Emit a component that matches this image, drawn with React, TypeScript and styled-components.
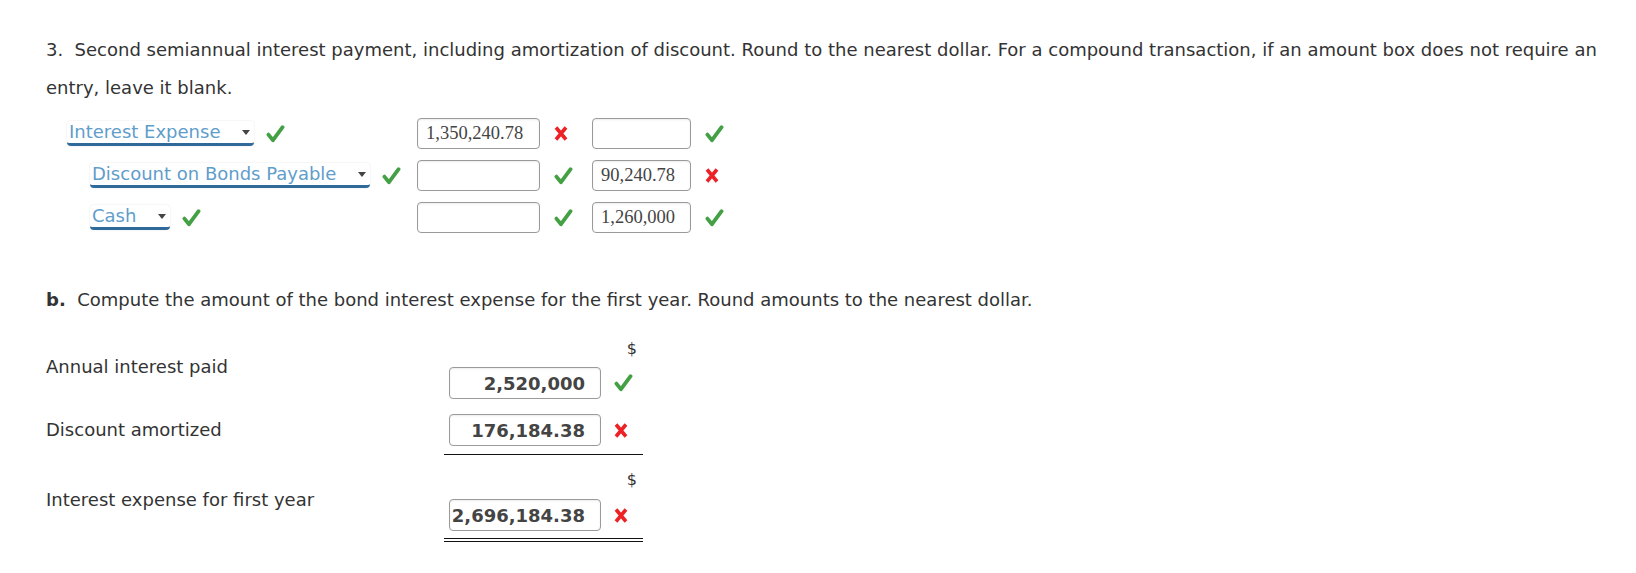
import React from "react";
import styled, { createGlobalStyle } from "styled-components";

const GlobalStyle = createGlobalStyle`
  html, body {
    margin: 0;
    padding: 0;
    background: #fff;
  }
  body {
    font-family: "DejaVu Sans", Verdana, sans-serif;
    color: #333;
  }
`;

const Page = styled.div`
  padding: 31px 0 0 46px;
  width: 1590px;
`;

const Prompt = styled.p`
  margin: 0;
  font-size: 18px;
  line-height: 38px;
  width: 1570px;
`;

const Journal = styled.div`
  display: grid;
  grid-template-columns: 371px 123px 52px 99px 40px;
  grid-auto-rows: 31px;
  row-gap: 11px;
  margin-top: 11px;
  align-items: center;
`;

const AccountCell = styled.div<{ $indent: number }>`
  display: flex;
  align-items: center;
  gap: 12px;
  padding-left: ${(p) => p.$indent}px;
`;

const Dropdown = styled.div`
  position: relative;
  font-size: 18px;
  line-height: 22px;
  color: #5f9dcb;
  background: #fff;
  border-radius: 4px;
  box-shadow: 0 0 2px rgba(0, 0, 0, 0.12);
  padding: 0 34px 0 2px;
  border-bottom: 3px solid #2f6a9b;
  white-space: nowrap;

  &::after {
    content: "";
    position: absolute;
    right: 4px;
    top: 9px;
    border-left: 4px solid transparent;
    border-right: 4px solid transparent;
    border-top: 5px solid #444;
  }
`;

const AmountBox = styled.div<{ $bold?: boolean; $width: number }>`
  box-sizing: border-box;
  width: ${(p) => p.$width}px;
  height: ${(p) => (p.$bold ? 32 : 31)}px;
  border: 1px solid #9a9a9a;
  border-radius: 4px;
  box-shadow: inset 0 1px 2px rgba(0, 0, 0, 0.08);
  display: flex;
  align-items: center;
  justify-content: ${(p) => (p.$bold ? "flex-end" : "flex-start")};
  padding: ${(p) => (p.$bold ? "0 15px 0 0" : "0 0 0 8px")};
  font-family: ${(p) =>
    p.$bold ? '"DejaVu Sans", Verdana, sans-serif' : '"Liberation Serif", "Times New Roman", serif'};
  font-weight: ${(p) => (p.$bold ? 700 : 400)};
  font-size: ${(p) => (p.$bold ? 18 : 18.5)}px;
  color: #444;
  white-space: nowrap;
`;

const MarkCell = styled.div`
  display: flex;
  align-items: center;
  padding-left: 14px;
`;

const Check = () => (
  <svg width="19" height="18" viewBox="0 0 19 18" aria-hidden="true">
    <path
      d="M2.4 9.6 L7 15.2 L16.6 2.2"
      fill="none"
      stroke="#44a044"
      strokeWidth="3.8"
      strokeLinecap="round"
      strokeLinejoin="round"
    />
  </svg>
);

const Cross = () => (
  <svg width="14" height="15" viewBox="0 0 14 15" aria-hidden="true">
    <path
      d="M2 1.5 L12 13.5 M12 1.5 L2 13.5"
      fill="none"
      stroke="#ec2227"
      strokeWidth="3.6"
      strokeLinecap="butt"
    />
  </svg>
);

const Mark = ({ ok }: { ok: boolean }) => <MarkCell>{ok ? <Check /> : <Cross />}</MarkCell>;

const SubPrompt = styled.p`
  margin: 56px 0 0;
  font-size: 18px;
  line-height: 22px;
`;

const Calc = styled.div`
  margin-top: 28px;
  display: flex;
  flex-direction: column;
`;

const CalcItem = styled.div<{ $top: number }>`
  display: grid;
  grid-template-columns: 398px 199px;
  margin-top: ${(p) => p.$top}px;
`;

const Label = styled.div<{ $pad: number }>`
  font-size: 18px;
  line-height: 22px;
  padding-top: ${(p) => p.$pad}px;
`;

const ValueCol = styled.div<{ $rule?: "single" | "double" }>`
  display: flex;
  flex-direction: column;
  padding-bottom: ${(p) => (p.$rule === "single" ? 8 : p.$rule === "double" ? 7 : 0)}px;
  border-bottom: ${(p) =>
    p.$rule === "single" ? "1.5px solid #111" : p.$rule === "double" ? "4px double #111" : "none"};
`;

const Dollar = styled.div<{ $gap: number }>`
  font-size: 16px;
  line-height: 20px;
  text-align: right;
  padding-right: 6px;
  margin-bottom: ${(p) => p.$gap}px;
`;

const ValueRow = styled.div`
  display: flex;
  align-items: center;
  padding-left: 5px;

  ${MarkCell} {
    padding-left: 13px;
  }
`;

const journal = [
  { account: "Interest Expense", indent: 21, debit: "1,350,240.78", debitOk: false, credit: "", creditOk: true },
  { account: "Discount on Bonds Payable", indent: 44, debit: "", debitOk: true, credit: "90,240.78", creditOk: false },
  { account: "Cash", indent: 44, debit: "", debitOk: true, credit: "1,260,000", creditOk: true },
];

export default function App() {
  return (
    <Page>
      <GlobalStyle />
      <Prompt>
        3.&nbsp; Second semiannual interest payment, including amortization of discount. Round to the nearest
        dollar. For a compound transaction, if an amount box does not require an entry, leave it blank.
      </Prompt>

      <Journal>
        {journal.map((row) => (
          <React.Fragment key={row.account}>
            <AccountCell $indent={row.indent}>
              <Dropdown>{row.account}</Dropdown>
              <Check />
            </AccountCell>
            <AmountBox $width={123}>{row.debit}</AmountBox>
            <Mark ok={row.debitOk} />
            <AmountBox $width={99}>{row.credit}</AmountBox>
            <Mark ok={row.creditOk} />
          </React.Fragment>
        ))}
      </Journal>

      <SubPrompt>
        <b>b.</b>&nbsp; Compute the amount of the bond interest expense for the first year. Round amounts to the
        nearest dollar.
      </SubPrompt>

      <Calc>
        <CalcItem $top={0}>
          <Label $pad={17}>Annual interest paid</Label>
          <ValueCol>
            <Dollar $gap={8}>$</Dollar>
            <ValueRow>
              <AmountBox $bold $width={152}>2,520,000</AmountBox>
              <Mark ok />
            </ValueRow>
          </ValueCol>
        </CalcItem>
        <CalcItem $top={15}>
          <Label $pad={5}>Discount amortized</Label>
          <ValueCol $rule="single">
            <ValueRow>
              <AmountBox $bold $width={152}>176,184.38</AmountBox>
              <Mark ok={false} />
            </ValueRow>
          </ValueCol>
        </CalcItem>
        <CalcItem $top={15}>
          <Label $pad={19}>Interest expense for first year</Label>
          <ValueCol $rule="double">
            <Dollar $gap={9}>$</Dollar>
            <ValueRow>
              <AmountBox $bold $width={152}>2,696,184.38</AmountBox>
              <Mark ok={false} />
            </ValueRow>
          </ValueCol>
        </CalcItem>
      </Calc>
    </Page>
  );
}
